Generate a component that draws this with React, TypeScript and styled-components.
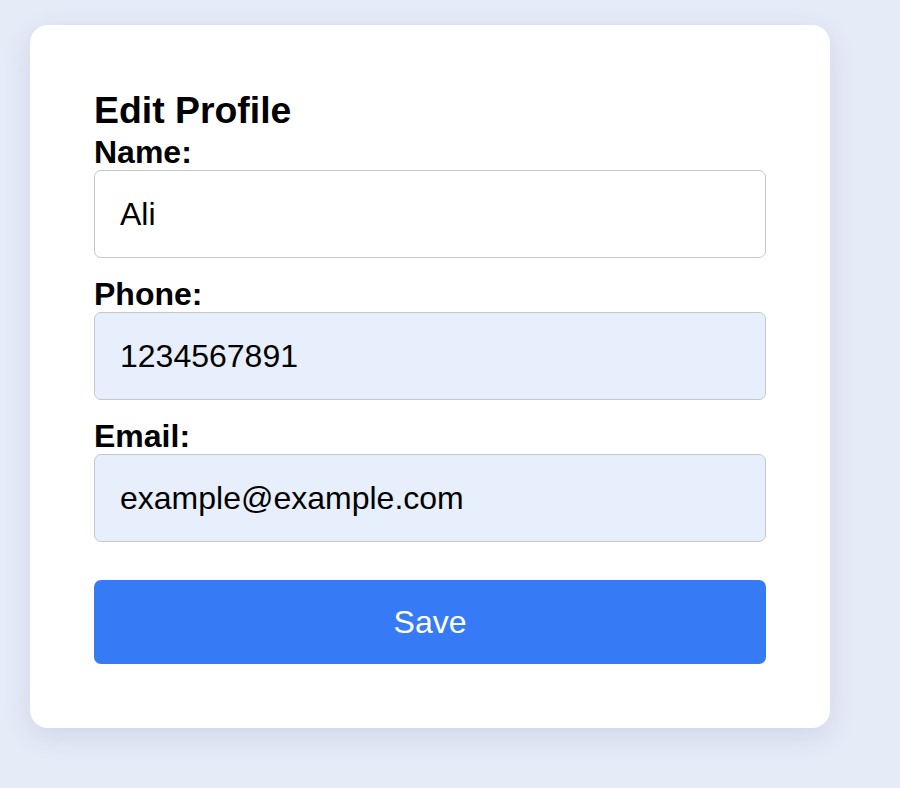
import React from "react";
import styled, { createGlobalStyle } from "styled-components";

const GlobalStyle = createGlobalStyle`
  html, body {
    margin: 0;
    padding: 0;
    background: #e6ebf8;
    font-family: "Liberation Sans", Arial, Helvetica, sans-serif;
  }
  * { box-sizing: border-box; }
`;

const Page = styled.div`
  min-height: 788px;
  padding: 25px 0 0 30px;
  background: #e6ebf8;
`;

const Card = styled.form`
  width: 800px;
  background: #ffffff;
  border-radius: 18px;
  padding: 64px;
  box-shadow: 0 8px 28px rgba(40, 60, 110, 0.12);
  display: flex;
  flex-direction: column;
`;

const Title = styled.h3`
  margin: 0;
  font-size: 37.4px;
  line-height: 43px;
  font-weight: 700;
  color: #000;
`;

const Label = styled.label`
  display: block;
  font-size: 32px;
  line-height: 36px;
  padding-top: 2px;
  font-weight: 700;
  color: #000;
`;

const Input = styled.input<{ $filled?: boolean }>`
  display: block;
  width: 100%;
  height: 88px;
  margin: 0 0 16px;
  padding: 0 24px 0 25px;
  font-family: "Liberation Sans", Arial, Helvetica, sans-serif;
  font-size: 32px;
  color: #000;
  background: ${(p) => (p.$filled ? "#e8effc" : "#ffffff")};
  border: 1.5px solid #c6c7cb;
  border-radius: 7px;
  outline: none;
`;

const SaveButton = styled.button`
  margin-top: 22px;
  width: 100%;
  height: 84px;
  border: none;
  border-radius: 7px;
  background: #367bf5;
  color: #ffffff;
  font-family: "Liberation Sans", Arial, Helvetica, sans-serif;
  font-size: 32px;
  cursor: pointer;
`;

export default function App() {
  return (
    <>
      <GlobalStyle />
      <Page>
        <Card onSubmit={(e) => e.preventDefault()}>
          <Title>Edit Profile</Title>
          <Label htmlFor="name">Name:</Label>
          <Input id="name" defaultValue="Ali" />
          <Label htmlFor="phone">Phone:</Label>
          <Input id="phone" $filled defaultValue="1234567891" />
          <Label htmlFor="email">Email:</Label>
          <Input id="email" $filled defaultValue="example@example.com" />
          <SaveButton type="submit">Save</SaveButton>
        </Card>
      </Page>
    </>
  );
}
